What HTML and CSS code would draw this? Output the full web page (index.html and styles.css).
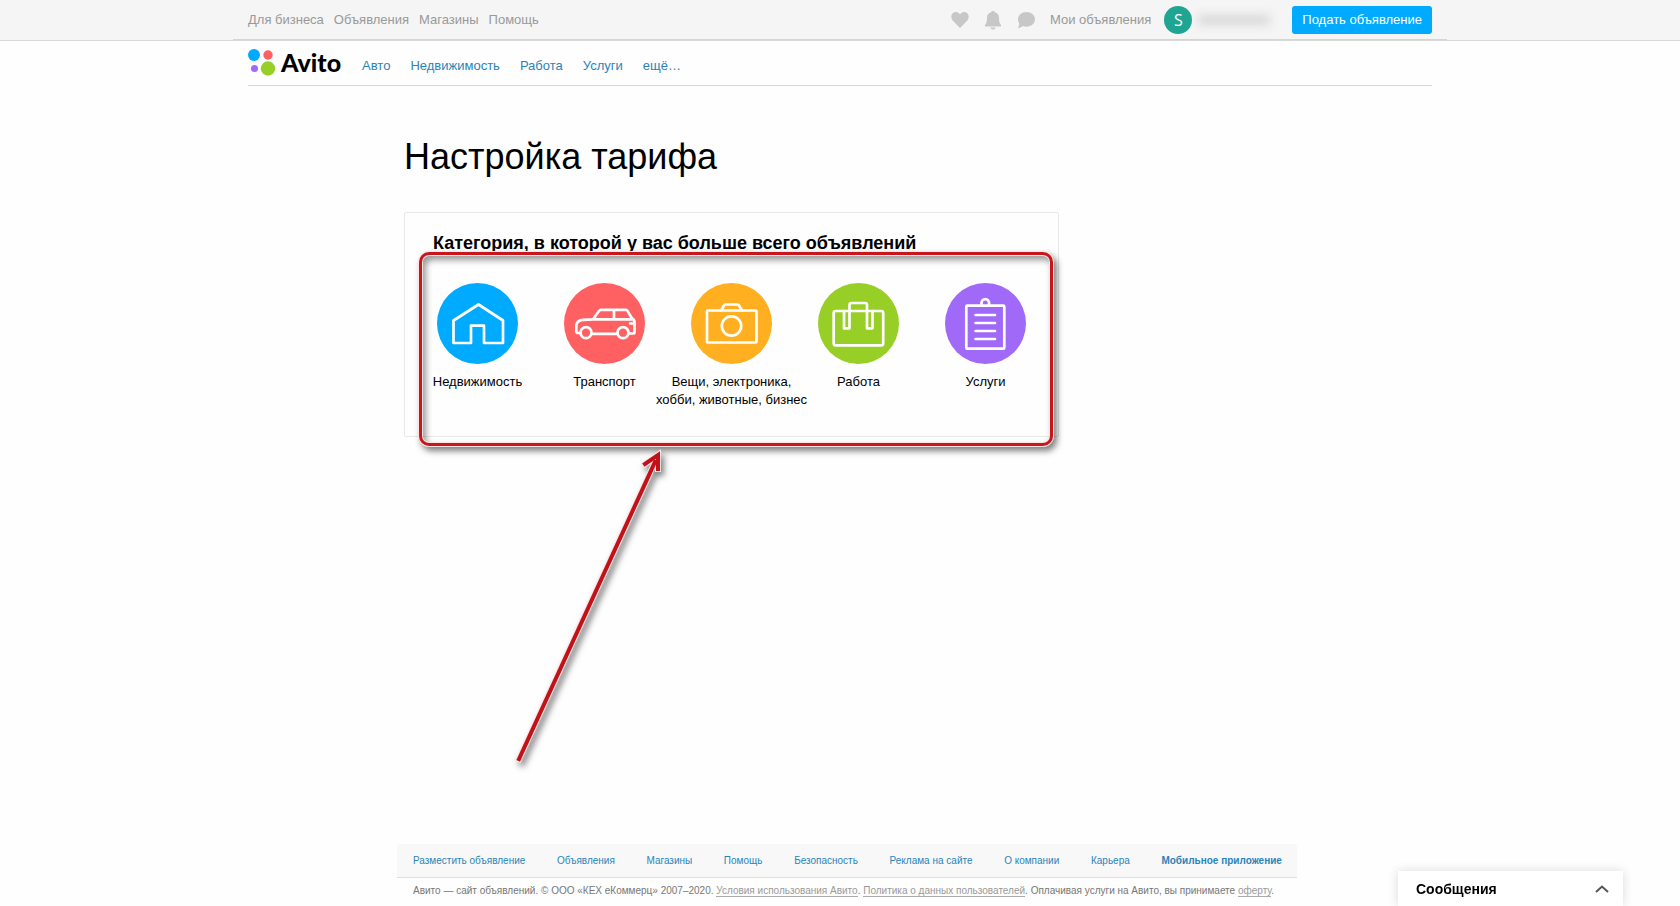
FILE: index.html
```html
<!DOCTYPE html>
<html lang="ru">
<head>
<meta charset="utf-8">
<meta name="viewport" content="width=device-width, initial-scale=1">
<title>Настройка тарифа — Avito</title>
<link rel="stylesheet" href="styles.css">
</head>
<body>
<header>
  <div class="topbar">
    <div class="topbar-inner">
      <nav class="top-links" aria-label="Сервис">
        <a href="#">Для бизнеса</a>
        <a href="#">Объявления</a>
        <a href="#">Магазины</a>
        <a href="#">Помощь</a>
      </nav>
      <div class="user-area">
        <a class="icon-link" href="#" aria-label="Избранное"><svg width="18" height="20" viewBox="0 0 18 20"><path d="M9 18 2.200 11C-2 6.500 1.500 2 5 2c1.800 0 3.200 1 4 2.400C9.800 3 11.200 2 13 2c3.500 0 7 4.500 2.800 9Z"/></svg></a>
        <a class="icon-link" href="#" aria-label="Уведомления"><svg width="18" height="20" viewBox="0 0 18 20"><path d="M9 1c1 0 1.700.5 1.800 1.200C13.600 2.800 15 5 15 7.500c0 4 .6 6 2 7.500v1.500H1V15c1.400-1.500 2-3.500 2-7.500 0-2.500 1.400-4.700 4.200-5.300C7.300 1.500 8 1 9 1ZM6.500 17.500h5a2.500 2 0 0 1-5 0Z"/></svg></a>
        <a class="icon-link" href="#" aria-label="Чат"><svg width="18" height="20" viewBox="0 0 18 20"><path d="M9.500 2C14.200 2 18 5.200 18 9.300s-3.800 7.400-8.500 7.400c-1.200 0-2.400-.2-3.400-.6C4.500 17.400 2.800 18 .7 18c1-1.300 1.500-2.800 1.500-4.500C1.400 12.300 1 10.900 1 9.300 1 5.200 4.800 2 9.500 2Z"/></svg></a>
        <a class="my-ads" href="#">Мои объявления</a>
        <div class="profile">
          <span class="avatar">S</span>
          <span class="hidden-name"></span>
        </div>
        <button class="post-button" type="button">Подать объявление</button>
      </div>
    </div>
  </div>
  <div class="mainbar">
    <a class="logo" href="#">
      <svg width="28" height="28" viewBox="0 0 28 28" aria-hidden="true"><circle cx="6" cy="7" r="6" fill="#0af"/><circle cx="20" cy="7" r="4.700" fill="#ff6163"/><circle cx="6.500" cy="20.500" r="3.500" fill="#a169f7"/><circle cx="20" cy="20.500" r="7.200" fill="#97cf26"/></svg>
      <span>Avito</span>
    </a>
    <nav class="categories-nav" aria-label="Категории">
      <a href="#">Авто</a>
      <a href="#">Недвижимость</a>
      <a href="#">Работа</a>
      <a href="#">Услуги</a>
      <a href="#">ещё…</a>
    </nav>
  </div>
</header>

<main class="content">
  <h1>Настройка тарифа</h1>
  <section class="card">
    <h2>Категория, в которой у вас больше всего объявлений</h2>
    <div class="tiles">
      <button class="tile" type="button">
        <svg class="tile-icon blue" viewBox="0 0 81 81"><path d="M16.500 37.500 41.500 21.500 66 37.500V60H47V42.700H34V60H16.500Z"/></svg>
        <span>Недвижимость</span>
      </button>
      <button class="tile" type="button">
        <svg class="tile-icon red" viewBox="0 0 81 81"><circle cx="22" cy="49.700" r="5.500"/><circle cx="59" cy="49.700" r="5.500"/><path d="M16.500 50H14q-1.700 0-1.700-2V43q0-5.500 6.500-6.200L29 36.300 35 28q.8-1.100 2-1.100H62q1 0 1.500 1L68 35.500q2.500 1 2.500 4V49q0 1.500-1.500 1.500H64.500M27.500 50.800H53.500M29 36.300H68M50 27V36M66 40.500H70"/></svg>
        <span>Транспорт</span>
      </button>
      <button class="tile" type="button">
        <svg class="tile-icon orange" viewBox="0 0 81 81"><rect x="16" y="27.500" width="49.500" height="32" rx="1"/><circle cx="40.500" cy="43" r="9.700"/><path d="M30 27.500 33 22.500Q33.500 21.500 34.500 21.500H46.500Q47.500 21.500 48 22.500L51 27.500"/></svg>
        <span>Вещи, электроника, хобби, животные, бизнес</span>
      </button>
      <button class="tile" type="button">
        <svg class="tile-icon green" viewBox="0 0 81 81"><rect x="15.700" y="28" width="49.500" height="34.300" rx="2"/><path d="M26 28V45.300H31.500V22Q31.500 20 33.500 20H47Q49 20 49 22V45.300H54.500V28"/></svg>
        <span>Работа</span>
      </button>
      <button class="tile" type="button">
        <svg class="tile-icon purple" viewBox="0 0 81 81"><rect x="21.300" y="22.700" width="38" height="43" rx="1"/><path d="M36.500 22.500V20a3.800 3.800 0 0 1 7.600 0V22.500M30.500 32H50M30.500 40H50M30.500 48H50M30.500 56H50"/></svg>
        <span>Услуги</span>
      </button>
    </div>
    <div class="highlight"></div>
    <svg class="arrow" width="160" height="330" viewBox="0 0 160 330" aria-hidden="true">
      <g class="arrow-halo"><path d="M9 316 145 19"/><path d="M135 21 148 12 148 26"/></g>
      <g class="arrow-line"><path d="M9 316 145 19"/><path d="M135 21 148 12 148 26"/></g>
    </svg>
  </section>
</main>

<footer class="footer">
  <nav class="footer-links" aria-label="Ссылки">
    <a href="#">Разместить объявление</a>
    <a href="#">Объявления</a>
    <a href="#">Магазины</a>
    <a href="#">Помощь</a>
    <a href="#">Безопасность</a>
    <a href="#">Реклама на сайте</a>
    <a href="#">О компании</a>
    <a href="#">Карьера</a>
    <a class="strong" href="#">Мобильное приложение</a>
  </nav>
  <p class="legal">Авито — сайт объявлений. © ООО «КЕХ еКоммерц» 2007–2020. <a href="#">Условия использования Авито</a>. <a href="#">Политика о данных пользователей</a>. Оплачивая услуги на Авито, вы принимаете <a href="#">оферту</a>.</p>
</footer>

<button class="messenger" type="button">
  <span>Сообщения</span>
  <svg width="14" height="8" viewBox="0 0 14 8" aria-hidden="true"><path d="M1 7 7 1.500 13 7"/></svg>
</button>
</body>
</html>
```

FILE: styles.css
```css
* { box-sizing: border-box; }

body {
  margin: 0;
  min-height: 100vh;
  display: flex;
  flex-direction: column;
  background: #fefefe;
  color: #000;
  font: 13px/18px "Liberation Sans", Arial, sans-serif;
}

a { text-decoration: none; color: #2a84b8; }

button {
  font: inherit;
  color: inherit;
  border: 0;
  background: none;
  padding: 0;
  cursor: pointer;
}

.topbar {
  background: #f5f5f5;
  border-bottom: 1px solid #d9d9d9;
}

.topbar-inner {
  display: flex;
  align-items: center;
  justify-content: space-between;
  max-width: 1214px;
  height: 40px;
  margin: 0 auto;
  padding: 0 15px;
  border-bottom: 1px solid #d5d5d5;
}

.top-links { display: flex; gap: 10px; }
.top-links a, .my-ads { color: #999; }

.user-area { display: flex; align-items: center; }
.icon-link { display: flex; margin-right: 15px; fill: #c7c7c7; }
.my-ads { margin-right: 13px; }
.profile { display: flex; align-items: center; width: 128px; }

.avatar {
  width: 28px;
  height: 28px;
  border-radius: 50%;
  background: #1fa591;
  color: #fff;
  font: 16px/28px "Open Sans", sans-serif;
  text-align: center;
}

.hidden-name {
  width: 72px;
  height: 10px;
  margin-left: 6px;
  background: #d8d8d8;
  filter: blur(5px);
}

.post-button {
  height: 28px;
  padding: 0 10px;
  border-radius: 3px;
  background: #0af;
  color: #fff;
}

.mainbar {
  display: flex;
  align-items: center;
  max-width: 1184px;
  height: 45px;
  margin: 0 auto;
  padding-bottom: 2px;
  border-bottom: 1px solid #d5d5d5;
}

.logo {
  display: flex;
  align-items: center;
  gap: 5px;
  margin-right: 21px;
  color: #000;
  font: 900 25px/28px Lato, sans-serif;
}

.categories-nav { display: flex; gap: 20px; padding-top: 7px; }

.content {
  flex: 1;
  width: 100%;
  max-width: 1184px;
  margin: 0 auto;
  padding: 49px 0 0 156px;
}

h1 {
  margin: 0;
  font-size: 36px;
  line-height: 44px;
  font-weight: 400;
}

.card {
  position: relative;
  max-width: 655px;
  margin-top: 33px;
  padding: 19px 10px 27px 9px;
  border: 1px solid #e8e8e8;
  border-radius: 2px;
}

h2 {
  margin: 0 0 29px;
  padding: 0 19px;
  font-size: 18px;
  line-height: 22px;
}

.tiles { display: grid; grid-template-columns: repeat(5, 1fr); }

.tile {
  display: flex;
  flex-direction: column;
  align-items: center;
  gap: 9px;
}

.tile span { width: 159px; margin: 0 -16px; }

.tile-icon {
  width: 81px;
  height: 81px;
  border-radius: 50%;
  fill: none;
  stroke: #fff;
  stroke-width: 2.700;
  stroke-linecap: round;
  stroke-linejoin: round;
}

.blue { background: #0af; }
.red { background: #ff6163; }
.orange { background: #ffaf20; }
.green { background: #97cf26; }
.purple { background: #a169f7; }

.highlight {
  position: absolute;
  inset: 39px 5px -10px 14px;
  border: 3px solid #c8161d;
  border-radius: 10px;
  box-shadow: 0 0 0 1px #fbe5e3, inset 0 0 0 1px #fbe5e3,
    3px 4px 6px 1px rgba(0, 0, 0, .5), inset 3px 4px 6px 1px rgba(0, 0, 0, .4);
  pointer-events: none;
}

.arrow {
  position: absolute;
  left: 105px;
  top: 230px;
  fill: none;
  stroke-linecap: square;
  filter: drop-shadow(3px 4px 3px rgba(0, 0, 0, .5));
  pointer-events: none;
}

.arrow-halo { stroke: #fbe5e3; stroke-width: 6px; }
.arrow-line { stroke: #c1121a; stroke-width: 4px; }

.footer {
  width: 100%;
  max-width: 1184px;
  margin: 0 auto;
  padding: 0 135px 6px 149px;
  font-size: 10px;
  line-height: 12px;
}

.footer-links {
  display: flex;
  justify-content: space-between;
  padding: 11px 15px 10px 16px;
  border-bottom: 1px solid #dedede;
  border-radius: 3px 3px 0 0;
  background: #f8f8f8;
}

.strong { font-weight: 700; }

.legal { margin: 0; padding: 7px 0 3px 16px; color: #777; }
.legal a { color: #999; border-bottom: 1px solid #aaa; }

.messenger {
  position: fixed;
  right: 57px;
  bottom: 0;
  display: flex;
  align-items: center;
  justify-content: space-between;
  width: 225px;
  height: 35px;
  padding: 0 14px 0 18px;
  background: #fff;
  box-shadow: 0 0 10px rgba(0, 0, 0, .14);
  font-size: 14px;
  font-weight: 700;
}

.messenger svg { fill: none; stroke: #555; stroke-width: 2px; }
```
